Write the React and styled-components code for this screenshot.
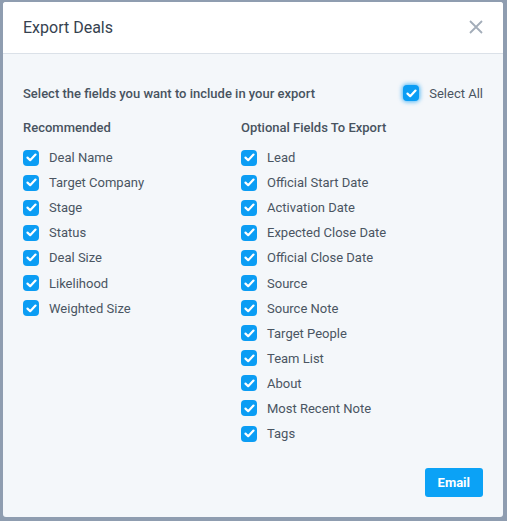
import React from "react";
import styled, { createGlobalStyle } from "styled-components";

const Global = createGlobalStyle`
  html, body { margin: 0; padding: 0; background: #8f9db0; }
  body { font-family: Roboto, "Noto Sans", Arial, sans-serif; }
  * { box-sizing: border-box; }
`;

const Page = styled.div`
  width: 507px;
  height: 521px;
  padding: 2px 4px 4px 3px;
`;

const Modal = styled.div`
  width: 500px;
  height: 515px;
  background: #f4f7fa;
  border-radius: 3px;
  overflow: hidden;
  display: flex;
  flex-direction: column;
`;

const Header = styled.div`
  height: 52px;
  background: #fff;
  border-bottom: 1px solid #dbe1e8;
  display: flex;
  align-items: center;
  justify-content: space-between;
  padding: 0 20px 1px;
  flex-shrink: 0;
`;

const Title = styled.h2`
  margin: 0;
  font-size: 16px;
  font-weight: 400;
  color: #36424f;
`;

const Close = styled.button`
  border: 0;
  background: none;
  padding: 0;
  width: 14px;
  height: 14px;
  display: flex;
  cursor: pointer;
`;

const Body = styled.div`
  flex: 1;
  display: flex;
  flex-direction: column;
  padding: 30px 20px 20px;
`;

const TopRow = styled.div`
  display: flex;
  align-items: center;
  justify-content: space-between;
  height: 18px;
`;

const Lead = styled.div`
  font-size: 13px;
  font-weight: 500;
  color: #48535f;
`;

const Columns = styled.div`
  display: grid;
  grid-template-columns: 218px 1fr;
  margin-top: 17px;
`;

const Column = styled.div`
  display: flex;
  flex-direction: column;
`;

const ColTitle = styled.div`
  font-size: 13px;
  font-weight: 500;
  color: #48535f;
  height: 18px;
  line-height: 18px;
  margin-bottom: 8px;
`;

const Row = styled.label`
  display: flex;
  align-items: center;
  gap: 10px;
  height: 25.1px;
  font-size: 13px;
  color: #4a5562;
  cursor: pointer;
`;

const Box = styled.span`
  width: 16px;
  height: 16px;
  border-radius: 4px;
  background: #0b9df4;
  display: inline-flex;
  align-items: center;
  justify-content: center;
  flex-shrink: 0;
  box-shadow: ${(p) => (p.$focus ? "0 0 4px 1px rgba(11,157,244,0.7)" : "none")};
`;

const Footer = styled.div`
  margin-top: auto;
  display: flex;
  justify-content: flex-end;
`;

const Button = styled.button`
  height: 29px;
  padding: 0 13px;
  border: 0;
  border-radius: 3px;
  background: #0ba2f6;
  color: #fff;
  font-family: Roboto, Arial, sans-serif;
  font-size: 13px;
  font-weight: 700;
  cursor: pointer;
`;

const Check = ({ focus }) => (
  <Box $focus={focus}>
    <svg width="11" height="9" viewBox="0 0 11 9">
      <path d="M1.5 4.6 L4.2 7.2 L9.5 1.6" fill="none" stroke="#fff" strokeWidth="2.2" strokeLinecap="round" strokeLinejoin="round" />
    </svg>
  </Box>
);

const recommended = ["Deal Name", "Target Company", "Stage", "Status", "Deal Size", "Likelihood", "Weighted Size"];
const optional = [
  "Lead", "Official Start Date", "Activation Date", "Expected Close Date", "Official Close Date",
  "Source", "Source Note", "Target People", "Team List", "About", "Most Recent Note", "Tags",
];

export default function App() {
  return (
    <Page>
      <Global />
      <Modal>
        <Header>
          <Title>Export Deals</Title>
          <Close aria-label="Close">
            <svg width="14" height="14" viewBox="0 0 14 14">
              <path d="M1 1 L13 13 M13 1 L1 13" stroke="#a3adb9" strokeWidth="1.8" />
            </svg>
          </Close>
        </Header>
        <Body>
          <TopRow>
            <Lead>Select the fields you want to include in your export</Lead>
            <Row>
              <Check focus />
              Select All
            </Row>
          </TopRow>
          <Columns>
            <Column>
              <ColTitle>Recommended</ColTitle>
              {recommended.map((f) => (
                <Row key={f}>
                  <Check />
                  {f}
                </Row>
              ))}
            </Column>
            <Column>
              <ColTitle>Optional Fields To Export</ColTitle>
              {optional.map((f) => (
                <Row key={f}>
                  <Check />
                  {f}
                </Row>
              ))}
            </Column>
          </Columns>
          <Footer>
            <Button>Email</Button>
          </Footer>
        </Body>
      </Modal>
    </Page>
  );
}
